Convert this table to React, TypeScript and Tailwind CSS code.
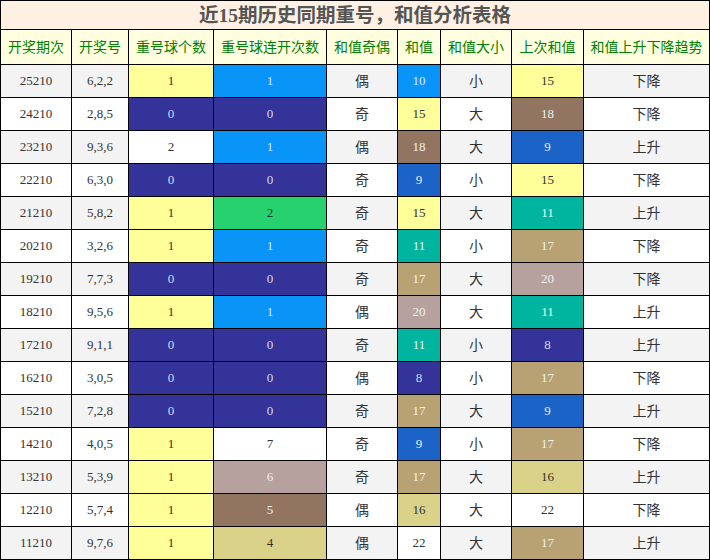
import React from "react";

type Tone = "y" | "db" | "b" | "g" | "br" | "tan" | "mau" | "kh" | "te" | "b2" | "w" | "";

const toneClass: Record<string, string> = {
  y: "bg-[#ffff99] text-[#333]",
  db: "bg-[#333399] text-[#d8d8e8]",
  b: "bg-[#0995f7] text-[#d4ecff]",
  g: "bg-[#28d170] text-[#1f3a2a]",
  br: "bg-[#917561] text-[#eee]",
  tan: "bg-[#b8a173] text-[#f3f0ea]",
  mau: "bg-[#b6a19f] text-[#f3efee]",
  kh: "bg-[#dbd28a] text-[#333]",
  te: "bg-[#00b59f] text-[#e8f8f5]",
  b2: "bg-[#1c63c8] text-[#e3ecff]",
  w: "bg-white text-[#333]",
  "": "text-[#333]",
};

type Row = [string, string, [string, Tone], [string, Tone], string, [string, Tone], string, [string, Tone], string];

const rows: Row[] = [
  ["25210", "6,2,2", ["1", "y"], ["1", "b"], "偶", ["10", "b"], "小", ["15", "y"], "下降"],
  ["24210", "2,8,5", ["0", "db"], ["0", "db"], "奇", ["15", "y"], "大", ["18", "br"], "下降"],
  ["23210", "9,3,6", ["2", "w"], ["1", "b"], "偶", ["18", "br"], "大", ["9", "b2"], "上升"],
  ["22210", "6,3,0", ["0", "db"], ["0", "db"], "奇", ["9", "b2"], "小", ["15", "y"], "下降"],
  ["21210", "5,8,2", ["1", "y"], ["2", "g"], "奇", ["15", "y"], "大", ["11", "te"], "上升"],
  ["20210", "3,2,6", ["1", "y"], ["1", "b"], "奇", ["11", "te"], "小", ["17", "tan"], "下降"],
  ["19210", "7,7,3", ["0", "db"], ["0", "db"], "奇", ["17", "tan"], "大", ["20", "mau"], "下降"],
  ["18210", "9,5,6", ["1", "y"], ["1", "b"], "偶", ["20", "mau"], "大", ["11", "te"], "上升"],
  ["17210", "9,1,1", ["0", "db"], ["0", "db"], "奇", ["11", "te"], "小", ["8", "db"], "上升"],
  ["16210", "3,0,5", ["0", "db"], ["0", "db"], "偶", ["8", "db"], "小", ["17", "tan"], "下降"],
  ["15210", "7,2,8", ["0", "db"], ["0", "db"], "奇", ["17", "tan"], "大", ["9", "b2"], "上升"],
  ["14210", "4,0,5", ["1", "y"], ["7", "w"], "奇", ["9", "b2"], "小", ["17", "tan"], "下降"],
  ["13210", "5,3,9", ["1", "y"], ["6", "mau"], "奇", ["17", "tan"], "大", ["16", "kh"], "上升"],
  ["12210", "5,7,4", ["1", "y"], ["5", "br"], "偶", ["16", "kh"], "大", ["22", "w"], "下降"],
  ["11210", "9,7,6", ["1", "y"], ["4", "kh"], "偶", ["22", "w"], "大", ["17", "tan"], "上升"],
];

const headers = ["开奖期次", "开奖号", "重号球个数", "重号球连开次数", "和值奇偶", "和值", "和值大小", "上次和值", "和值上升下降趋势"];
const widths = [71, 57, 85, 113, 71, 43, 71, 72, 126];

const font = "font-['Liberation_Serif','Noto_Sans_CJK_SC',serif]";

function Num({ v, tone }: { v: string; tone: Tone }) {
  return <td className={`border border-black text-center text-[13px] ${toneClass[tone]}`}>{v}</td>;
}

function Txt({ v, size = "text-[13px]" }: { v: string; size?: string }) {
  return <td className={`border border-black text-center text-[#333] ${size}`}>{v}</td>;
}

export default function App() {
  return (
    <div className={`w-[710px] h-[560px] bg-white ${font}`}>
      <table className="w-[710px] table-fixed border-collapse">
        <colgroup>
          {widths.map((w, i) => (
            <col key={i} style={{ width: w }} />
          ))}
        </colgroup>
        <thead>
          <tr className="h-[29px]">
            <th colSpan={9} className="border border-black bg-[#fef0e2] text-[19.5px] font-bold text-[#555] leading-none pt-[2px]">
              近15期历史同期重号，和值分析表格
            </th>
          </tr>
          <tr className="h-[35px] bg-[#ffffe0]">
            {headers.map((h) => (
              <th key={h} className="border border-black text-[14px] font-normal text-[#008000]">
                {h}
              </th>
            ))}
          </tr>
        </thead>
        <tbody>
          {rows.map((r, i) => (
            <tr key={r[0]} className={`h-[33px] ${i % 2 === 0 ? "bg-[#f3f3f3]" : "bg-white"}`}>
              <Txt v={r[0]} />
              <Txt v={r[1]} />
              <Num v={r[2][0]} tone={r[2][1]} />
              <Num v={r[3][0]} tone={r[3][1]} />
              <Txt v={r[4]} size="text-[14px]" />
              <Num v={r[5][0]} tone={r[5][1]} />
              <Txt v={r[6]} size="text-[14px]" />
              <Num v={r[7][0]} tone={r[7][1]} />
              <Txt v={r[8]} size="text-[14px]" />
            </tr>
          ))}
        </tbody>
      </table>
    </div>
  );
}
